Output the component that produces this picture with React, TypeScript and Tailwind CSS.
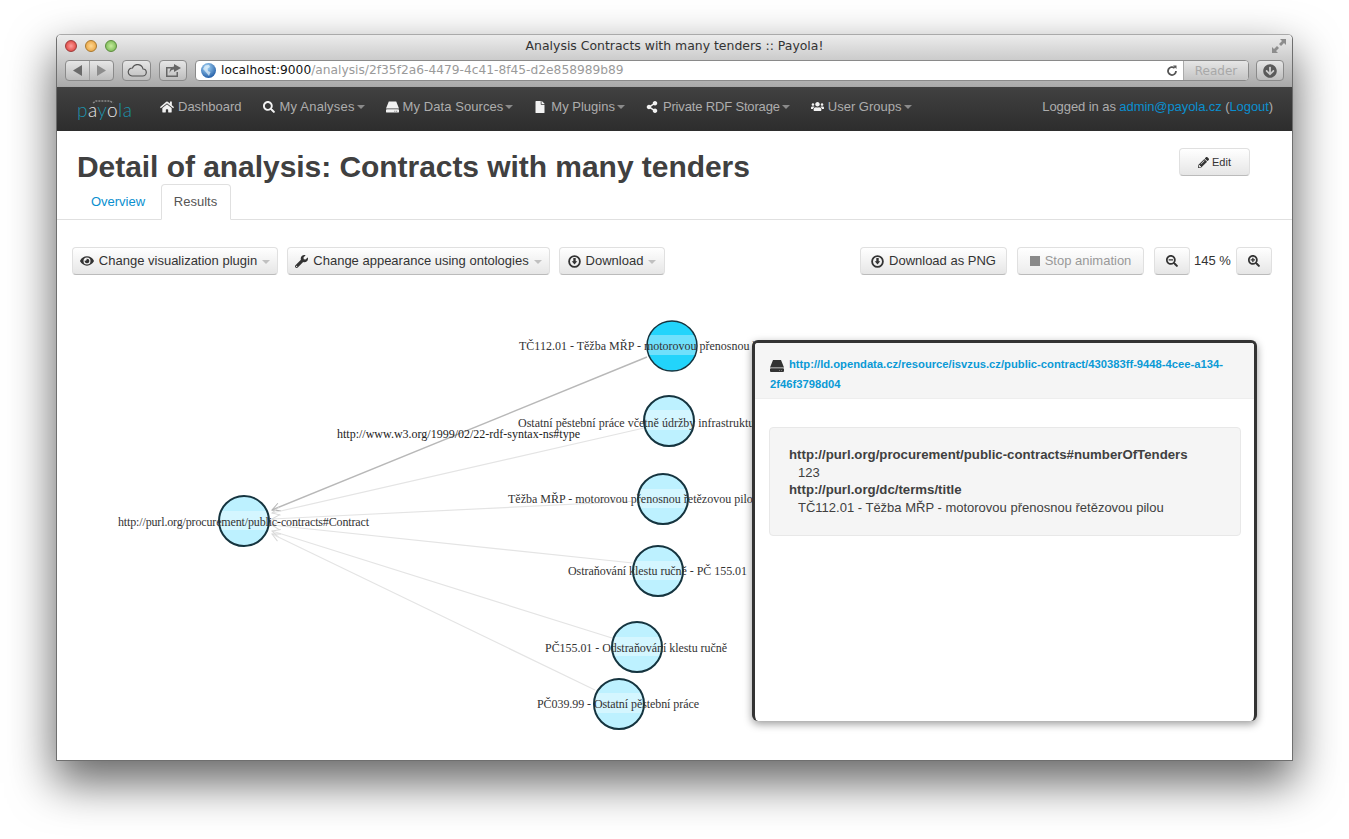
import {
  FaHome,
  FaSearch,
  FaFile,
  FaShareAlt,
  FaUsers,
  FaEye,
  FaWrench,
  FaPencilAlt,
  FaSearchMinus,
  FaSearchPlus,
  FaArrowCircleDown,
} from "react-icons/fa";

function HddIcon({ color = "currentColor" }: { color?: string }) {
  return (
    <svg width="14" height="12" viewBox="0 0 14 12" className="inline-block">
      <path d="M3 0h8l3 7.500H0z" fill={color} />
      <path d="M1 8.300h12a1 1 0 0 1 1 1V11a1 1 0 0 1-1 1H1a1 1 0 0 1-1-1V9.300a1 1 0 0 1 1-1z" fill={color} />
      <path d="M9 10h1v1H9zM11 10h1v1h-1z" fill="#777777" />
    </svg>
  );
}

function CircleDown() {
  return (
    <svg width="13" height="13" viewBox="0 0 13 13" fill="none">
      <circle cx="6.500" cy="6.500" r="5.400" stroke="#333333" strokeWidth="1.800" />
      <path d="M5.300 3h2.400v3.200h1.600L6.500 9.600 3.700 6.200h1.600z" fill="#333333" />
    </svg>
  );
}

const navItems = [
  { label: "My Analyses", icon: <FaSearch size={12} />, track: "tracking-[0.18px]" },
  { label: "My Data Sources", icon: <HddIcon />, track: "tracking-[0.07px]" },
  { label: "My Plugins", icon: <FaFile size={12} />, track: "" },
  { label: "Private RDF Storage", icon: <FaShareAlt size={12} />, track: "tracking-[-0.16px]" },
  { label: "User Groups", icon: <FaUsers size={15} />, track: "" },
];

const nodes = [
  { x: 672, y: 346, ly: 350, fill: "url(#nodeActive)", lx: 519, text: "TČ112.01 - Těžba MŘP - motorovou přenosnou řetězovou pilou" },
  { x: 669, y: 421, ly: 427, fill: "url(#node)", lx: 518, text: "Ostatní pěstební práce včetně údržby infrastruktury" },
  { x: 663, y: 499, ly: 503, fill: "url(#node)", lx: 508, text: "Těžba MŘP - motorovou přenosnou řetězovou pilou" },
  { x: 658, y: 571, ly: 575, fill: "url(#node)", lx: 568, w: 179, text: "Ostraňování klestu ručně - PČ 155.01" },
  { x: 637, y: 647, ly: 652, fill: "url(#node)", lx: 545, w: 182, text: "PČ155.01 - Odstraňování klestu ručně" },
  { x: 619, y: 704, ly: 708, fill: "url(#node)", lx: 537, w: 162, text: "PČ039.99 - Ostatní pěstební práce" },
  { x: 244, y: 521, ly: 526, fill: "url(#node)", lx: 118, w: 251, text: "http://purl.org/procurement/public-contracts#Contract" },
];

const edges = [
  { x1: 647, y1: 357, x2: 272, y2: 510, color: "#b8b8b8", width: 1.4, marker: "url(#arrowDark)" },
  { x1: 644, y1: 428, x2: 272, y2: 513, color: "#e4e4e4", width: 1.2, marker: "url(#arrow)" },
  { x1: 638, y1: 501, x2: 272, y2: 519, color: "#e4e4e4", width: 1.2, marker: "url(#arrow)" },
  { x1: 633, y1: 563, x2: 272, y2: 525, color: "#e4e4e4", width: 1.2, marker: "url(#arrow)" },
  { x1: 612, y1: 638, x2: 272, y2: 531, color: "#e4e4e4", width: 1.2, marker: "url(#arrow)" },
  { x1: 595, y1: 690, x2: 272, y2: 534, color: "#e4e4e4", width: 1.2, marker: "url(#arrow)" },
];

function Caret({ className = "border-t-[#c0c0c0]" }: { className?: string }) {
  return <span className={`mt-[1px] h-0 w-0 border-x-4 border-t-4 border-x-transparent ${className}`} />;
}

function Btn({ children, className = "" }: { children: React.ReactNode; className?: string }) {
  return (
    <button className={`flex h-7 items-center justify-center gap-[5px] rounded-[4px] border border-[#e0e0e0] border-b-[#bbbbbb] bg-linear-to-b from-white to-[#e6e6e6] text-[13px] text-[#333333] ${className}`}>
      {children}
    </button>
  );
}

function ToolBtn({ children, className = "" }: { children: React.ReactNode; className?: string }) {
  return (
    <div className={`flex h-[21px] items-center justify-center rounded-[4px] border border-[#8a8a8a] bg-linear-to-b from-[#e6e6e6] to-[#bdbdbd] text-[#555555] ${className}`}>
      {children}
    </div>
  );
}

function Graph() {
  return (
    <svg width="1235" height="470" viewBox="57 290 1235 470" className="block">
      <defs>
        <linearGradient id="node" x1="0" y1="0" x2="0" y2="1">
          <stop offset="0.29" stopColor="#bdf1ff" />
          <stop offset="0.29" stopColor="#d4f6ff" />
          <stop offset="0.68" stopColor="#d4f6ff" />
          <stop offset="0.68" stopColor="#bdf1ff" />
        </linearGradient>
        <linearGradient id="nodeActive" x1="0" y1="0" x2="0" y2="1">
          <stop offset="0.29" stopColor="#22d4fb" />
          <stop offset="0.29" stopColor="#6fe0fb" />
          <stop offset="0.68" stopColor="#6fe0fb" />
          <stop offset="0.68" stopColor="#22d4fb" />
        </linearGradient>
        <marker id="arrow" markerUnits="userSpaceOnUse" markerWidth="12" markerHeight="12" refX="10" refY="6" orient="auto">
          <path d="M2 2 L10 6 L2 10" fill="none" stroke="#d8d8d8" />
        </marker>
        <marker id="arrowDark" markerUnits="userSpaceOnUse" markerWidth="12" markerHeight="12" refX="10" refY="6" orient="auto">
          <path d="M2 2 L10 6 L2 10" fill="none" stroke="#b4b4b4" />
        </marker>
      </defs>
      {edges.map((e) => (
        <line key={e.y1} x1={e.x1} y1={e.y1} x2={e.x2} y2={e.y2} stroke={e.color} strokeWidth={e.width} markerEnd={e.marker} />
      ))}
      {nodes.map((n) => (
        <circle key={n.y} cx={n.x} cy={n.y} r="25" fill={n.fill} stroke="#15343f" strokeWidth={n.y === 346 ? 1.5 : 2} />
      ))}
      <g fontFamily="'Liberation Serif', serif" fontSize="12" fill="#333333">
        {nodes.map((n) => (
          <text key={n.text} x={n.lx} y={n.ly} textLength={n.w}>
            {n.text}
          </text>
        ))}
        <text x="337" y="438" fill="#222222">http://www.w3.org/1999/02/22-rdf-syntax-ns#type</text>
      </g>
    </svg>
  );
}

export default function App() {
  return (
    <div className="h-[839px] w-[1349px] overflow-hidden bg-white pl-[56px] pt-[34px] font-['Liberation_Sans',sans-serif]">
      <div className="flex h-[727px] w-[1237px] flex-col rounded-t-[5px] border border-[#6f6f6f] border-t-[#aaaaaa] shadow-[0_20px_45px_2px_rgba(0,0,0,0.6)]">
        {/* safari chrome */}
        <div className="h-[52px] shrink-0 rounded-t-[5px] bg-linear-to-b from-[#ececec] to-[#a9a9a9] px-[8px]">
          <div className="relative flex h-[25px] items-center justify-center pb-[2px] font-['DejaVu_Sans',sans-serif] text-[12.450px] text-[#333333]">
            <div className="absolute left-0 top-[5px] flex gap-[8px]">
              <span className="h-3 w-3 rounded-full border border-[#9c3a3a] bg-radial from-[#ff9a9a] to-[#d4292b]" />
              <span className="h-3 w-3 rounded-full border border-[#a8782e] bg-radial from-[#ffd890] to-[#e49a2a]" />
              <span className="h-3 w-3 rounded-full border border-[#5c8c3c] bg-radial from-[#c6ec9c] to-[#6cb048]" />
            </div>
            Analysis Contracts with many tenders :: Payola!
            <svg className="absolute right-[-2px] top-[4px]" width="14" height="14" viewBox="0 0 14 14" fill="#8c8c8c">
              <path d="M8 0h6v6l-2-2-3 3-2-2 3-3zM6 14H0V8l2 2 3-3 2 2-3 3z" />
            </svg>
          </div>
          <div className="flex items-center">
            <ToolBtn className="w-[49px] gap-[6px]">
              <svg width="10" height="11" viewBox="0 0 10 11" fill="#6b6b6b"><path d="M0 5.500 9 0v11z" /></svg>
              <span className="h-[19px] w-px bg-[#a0a0a0]" />
              <svg width="10" height="11" viewBox="0 0 10 11" fill="#8d8d8d"><path d="M10 5.500 1 0v11z" /></svg>
            </ToolBtn>
            <ToolBtn className="ml-[8px] w-[29px]">
              <svg width="20" height="13" viewBox="0 0 20 13" fill="none" stroke="#555555" strokeWidth="1.2">
                <path d="M5 12h10.500a3.500 3.500 0 0 0 .5-7 5.500 5.500 0 0 0-10.500-1A4 4 0 0 0 5 12z" />
              </svg>
            </ToolBtn>
            <ToolBtn className="ml-[8px] w-[28px]">
              <svg width="16" height="13" viewBox="0 0 16 13" fill="#666666">
                <path d="M1 3h6v1.500H2.500v7h9V8H13v5H1z" />
                <path d="M9 0l7 4-7 4V5.500C7 5.500 5.500 6.500 4.500 9 4.500 5 6.500 2.800 9 2.500z" />
              </svg>
            </ToolBtn>
            <div className="ml-[8px] flex h-[21px] w-[1054px] items-center overflow-hidden rounded-[4px] border border-[#8a8a8a] bg-white pl-[5px] font-['DejaVu_Sans',sans-serif] text-[12.240px]">
              <svg width="15" height="15" viewBox="0 0 15 15" className="shrink-0">
                <defs>
                  <radialGradient id="globe" cx="0.4" cy="0.3" r="0.8">
                    <stop offset="0" stopColor="#a6d8fa" />
                    <stop offset="1" stopColor="#144f9c" />
                  </radialGradient>
                </defs>
                <circle cx="7.500" cy="7.500" r="7.500" fill="url(#globe)" />
                <path d="M4 2.500 8 1.800 9 4 6.500 5.500 7 8 9.500 9 8 13 6 10.500 3.500 7.500 2 6z" fill="#e8f4fb" opacity="0.7" />
              </svg>
              <span className="ml-[5px] text-[#111111]">localhost:9000</span>
              <span className="text-[#9a9a9a]">/analysis/2f35f2a6-4479-4c41-8f45-d2e858989b89</span>
              <svg className="ml-auto mr-[5px]" width="12" height="12" viewBox="0 0 12 12" fill="none" stroke="#555555" strokeWidth="1.8">
                <path d="M10 6a4 4 0 1 1-1.400-3" />
                <path d="M7 0.500h3.500v3.500z" fill="#555555" stroke="none" />
              </svg>
              <div className="flex h-full w-[65px] items-center justify-center border-l border-[#aaaaaa] bg-linear-to-b from-[#e6e6e6] to-[#c4c4c4] text-[12px] text-[#a8a8a8]">
                Reader
              </div>
            </div>
            <ToolBtn className="ml-[7px] w-[28px]">
              <FaArrowCircleDown size={14} color="#5a5a5a" />
            </ToolBtn>
          </div>
        </div>

        {/* navbar */}
        <div className="flex h-[44px] shrink-0 items-center bg-linear-to-b from-[#414141] to-[#2d2d2d] pb-[5px] pl-[20px] pr-[19px] text-[13px] text-[#adadad] shadow-[0_1px_2px_rgba(0,0,0,0.15)]">
          <div className="relative mt-[5px] w-[83px] font-['Lato',sans-serif] text-[19px] font-light leading-none tracking-[0.4px] text-[#1d93ad]">
            <svg className="absolute left-[15px] top-[0px]" width="22" height="4" viewBox="0 0 22 4" fill="none" stroke="#8a8a8a" strokeWidth="1.5" strokeDasharray="2 1">
              <path d="M1 3 4 1h14l3 2" />
            </svg>
            p<span className="text-[#e6e6e6]">a</span>y<span className="text-[#e6e6e6]">o</span>la
          </div>
          <div className="flex items-center gap-[21px]">
            <div className="flex items-center gap-[4px]">
              <span className="flex w-[14px] text-[#f2f2f2]"><FaHome size={14} /></span>
              Dashboard
            </div>
            {navItems.map((item) => (
              <div key={item.label} className="flex items-center gap-[4px]">
                <span className="flex w-[13px] text-[#f2f2f2]">{item.icon}</span>
                <span className={item.track}>{item.label}</span>
                <Caret className="-ml-[2px] border-t-[#8a8a8a]" />
              </div>
            ))}
          </div>
          <div className="ml-auto tracking-[-0.08px]">
            Logged in as <span className="text-[#0a8fcf]">admin@payola.cz</span> (<span className="text-[#0a8fcf]">Logout</span>)
          </div>
        </div>

        {/* page */}
        <div className="flex flex-1 flex-col bg-white">
          <div className="flex h-[53px] shrink-0 items-start justify-between pl-[20px] pr-[42px] pt-[17px]">
            <h1 className="mt-px text-[30px] font-bold leading-[36px] tracking-[-0.05px] text-[#404040]">Detail of analysis: Contracts with many tenders</h1>
            <Btn className="w-[71px] !gap-[3px]">
              <FaPencilAlt size={11} /> <span className="text-[11px]">Edit</span>
            </Btn>
          </div>
          <div className="flex h-[36px] shrink-0 border-b border-[#e0e0e0] pl-[19px] text-[13px]">
            <div className="flex w-[85px] items-center justify-center pr-[1px] text-[#0a8fcf]">Overview</div>
            <div className="-mb-px flex w-[70px] items-center justify-center rounded-t-[4px] border border-[#e0e0e0] border-b-white bg-white pr-[1px] text-[#555555]">Results</div>
          </div>
          <div className="flex shrink-0 items-center pb-[15px] pl-[15px] pr-[20px] pt-[27px]">
            <Btn className="w-[206px]"><FaEye size={14} /> Change visualization plugin <Caret /></Btn>
            <Btn className="ml-[9px] w-[263px]"><FaWrench size={13} /> Change appearance using ontologies <Caret /></Btn>
            <Btn className="ml-[9px] w-[106px]"><CircleDown /> Download <Caret /></Btn>
            <Btn className="ml-auto w-[147px]"><CircleDown /> Download as PNG</Btn>
            <Btn className="ml-[10px] w-[127px] from-[#f2f2f2] to-[#ececec] text-[#999999]">
              <span className="h-[10px] w-[10px] bg-[#8a8a8a]" /> Stop animation
            </Btn>
            <Btn className="ml-[10px] w-9"><FaSearchMinus size={12} /></Btn>
            <span className="ml-1 mr-[5px] w-[37px] text-[13px] text-[#333333]">145 %</span>
            <Btn className="w-9"><FaSearchPlus size={12} /></Btn>
          </div>
          <div className="relative flex-1">
            <Graph />
            <div className="absolute left-[695px] top-[50px] h-[381px] w-[505px] overflow-hidden rounded-[6px] border-[3px] border-b-0 border-[#333333] bg-white shadow-[0_3px_8px_rgba(0,0,0,0.4)]">
              <div className="h-[56px] border-b border-[#eeeeee] bg-[#f5f5f5] pl-[15px] pr-[20px] pt-[12px] text-[11.230px] font-bold leading-[19px] text-[#0a9ad6]">
                <span className="mr-[5px] align-[-1px]"><HddIcon color="#333333" /></span>
                http://ld.opendata.cz/resource/isvzus.cz/public-contract/430383ff-9448-4cee-a134-2f46f3798d04
              </div>
              <div className="ml-[14px] mr-[13px] mt-[28px] h-[109px] rounded-[4px] border border-[#e8e8e8] bg-[#f5f5f5] pl-[19px] pt-[18px] text-[13px] leading-[17.500px] text-[#404040]">
                <div className="text-[13.230px] font-bold">http://purl.org/procurement/public-contracts#numberOfTenders</div>
                <div className="pl-[9px]">123</div>
                <div className="text-[13.230px] font-bold">http://purl.org/dc/terms/title</div>
                <div className="pl-[9px]">TČ112.01 - Těžba MŘP - motorovou přenosnou řetězovou pilou</div>
              </div>
            </div>
          </div>
        </div>
      </div>
    </div>
  );
}
